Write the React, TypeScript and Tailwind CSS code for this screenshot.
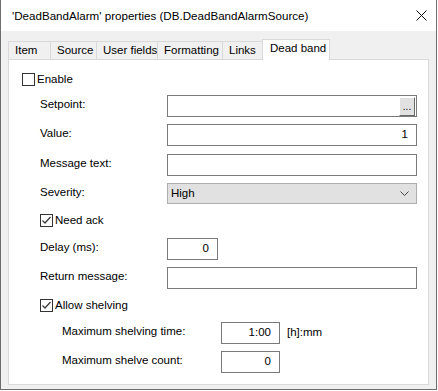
import React from 'react';

const font = { fontFamily: '"Liberation Sans", Arial, sans-serif' };

const Checkbox = ({ checked }: { checked?: boolean }) => (
    <div className="w-[13px] h-[13px] border border-[#333333] bg-white flex items-center justify-center shrink-0">
        {checked && (
            <svg width="11" height="11" viewBox="0 0 11 11">
                <polyline points="1.5,5.5 4,8 9.5,2" fill="none" stroke="#3c3c3c" strokeWidth="1.3" />
            </svg>
        )}
    </div>
);

const TextBox = ({ className, value }: { className: string; value?: string }) => (
    <div className={`h-[22px] border border-[#7a7a7a] bg-white flex items-center justify-end pr-[8px] ${className}`}>
        {value}
    </div>
);

const tabs = [
    { label: 'Item', w: 'w-[42px]' },
    { label: 'Source', w: 'w-[46px]' },
    { label: 'User fields', w: 'w-[61px]' },
    { label: 'Formatting', w: 'w-[65px]' },
    { label: 'Links', w: 'w-[40px]' },
];

export default function App() {
    return (
        <div className="w-[437px] h-[390px] border-x border-b border-[#6e6e6e] bg-[#f0f0f0] flex flex-col text-black text-[11.5px]" style={font}>
            {/* Title bar */}
            <div className="h-[31px] bg-white flex items-center justify-between pl-[11px] pr-[9px] shrink-0">
                <span className="text-[11.6px]">'DeadBandAlarm' properties (DB.DeadBandAlarmSource)</span>
                <svg width="11" height="11" viewBox="0 0 11 11">
                    <path d="M0.5 0.5 L10.5 10.5 M10.5 0.5 L0.5 10.5" stroke="#111" strokeWidth="1" />
                </svg>
            </div>

            {/* Tabs */}
            <div className="flex items-end pl-[7px] mt-[7px] h-[21px] shrink-0">
                {tabs.map((t) => (
                    <div key={t.label} className={`${t.w} h-[18px] border-l border-t border-[#d9d9d9] pl-[6px] flex items-center whitespace-nowrap`}>
                        {t.label}
                    </div>
                ))}
                <div className="w-[68px] h-[21px] border-x border-t border-[#d9d9d9] bg-white pl-[7px] pb-[2px] flex items-center whitespace-nowrap relative z-10 -mb-px">
                    Dead band
                </div>
            </div>

            {/* Panel */}
            <div className="ml-[7px] w-[421px] h-[326px] border border-[#d9d9d9] bg-white flex flex-col">
                <div className="flex items-center gap-[2px] mt-[13px] pl-[13px] h-[13px]">
                    <Checkbox />
                    <span>Enable</span>
                </div>

                <div className="flex items-center mt-[9px] pl-[31px]">
                    <span className="w-[127px] mb-[2px]">Setpoint:</span>
                    <div className="w-[250px] h-[22px] border border-[#7a7a7a] bg-white flex items-center justify-end pr-px">
                        <div className="w-[16px] h-[19px] bg-[#e1e1e1] border-t border-l border-t-white border-l-white border-b border-r border-b-[#696969] border-r-[#696969] flex items-end justify-center pb-[3px] text-[10px] leading-none">
                            ...
                        </div>
                    </div>
                </div>

                <div className="flex items-center mt-[7px] pl-[31px]">
                    <span className="w-[127px] mb-[2px]">Value:</span>
                    <TextBox className="w-[250px]" value="1" />
                </div>

                <div className="flex items-center mt-[8px] pl-[31px]">
                    <span className="w-[127px] mb-[2px]">Message text:</span>
                    <TextBox className="w-[250px]" />
                </div>

                <div className="flex items-center mt-[7px] pl-[31px]">
                    <span className="w-[127px] mb-[2px]">Severity:</span>
                    <div className="w-[250px] h-[21px] border border-[#adadad] bg-[#e1e1e1] flex items-center justify-between pl-[3px] pr-[7px]">
                        <span>High</span>
                        <svg width="9" height="5" viewBox="0 0 9 5">
                            <polyline points="0.5,0.5 4.5,4.5 8.5,0.5" fill="none" stroke="#444" strokeWidth="1" />
                        </svg>
                    </div>
                </div>

                <div className="flex items-center gap-[2px] mt-[10px] pl-[31px] h-[13px]">
                    <Checkbox checked />
                    <span>Need ack</span>
                </div>

                <div className="flex items-center mt-[11px] pl-[31px]">
                    <span className="w-[127px] mb-[2px]">Delay (ms):</span>
                    <TextBox className="w-[51px]" value="0" />
                </div>

                <div className="flex items-center mt-[7px] pl-[31px]">
                    <span className="w-[127px] mb-[2px]">Return message:</span>
                    <TextBox className="w-[250px]" />
                </div>

                <div className="flex items-center gap-[2px] mt-[10px] pl-[31px] h-[13px]">
                    <Checkbox checked />
                    <span>Allow shelving</span>
                </div>

                <div className="flex items-center mt-[10px] pl-[53px]">
                    <span className="w-[159px] mb-[2px]">Maximum shelving time:</span>
                    <TextBox className="w-[59px]" value="1:00" />
                    <span className="ml-[7px]">[h]:mm</span>
                </div>

                <div className="flex items-center mt-[7px] pl-[53px]">
                    <span className="w-[159px] mb-[2px]">Maximum shelve count:</span>
                    <TextBox className="w-[59px]" value="0" />
                </div>
            </div>
        </div>
    );
}
